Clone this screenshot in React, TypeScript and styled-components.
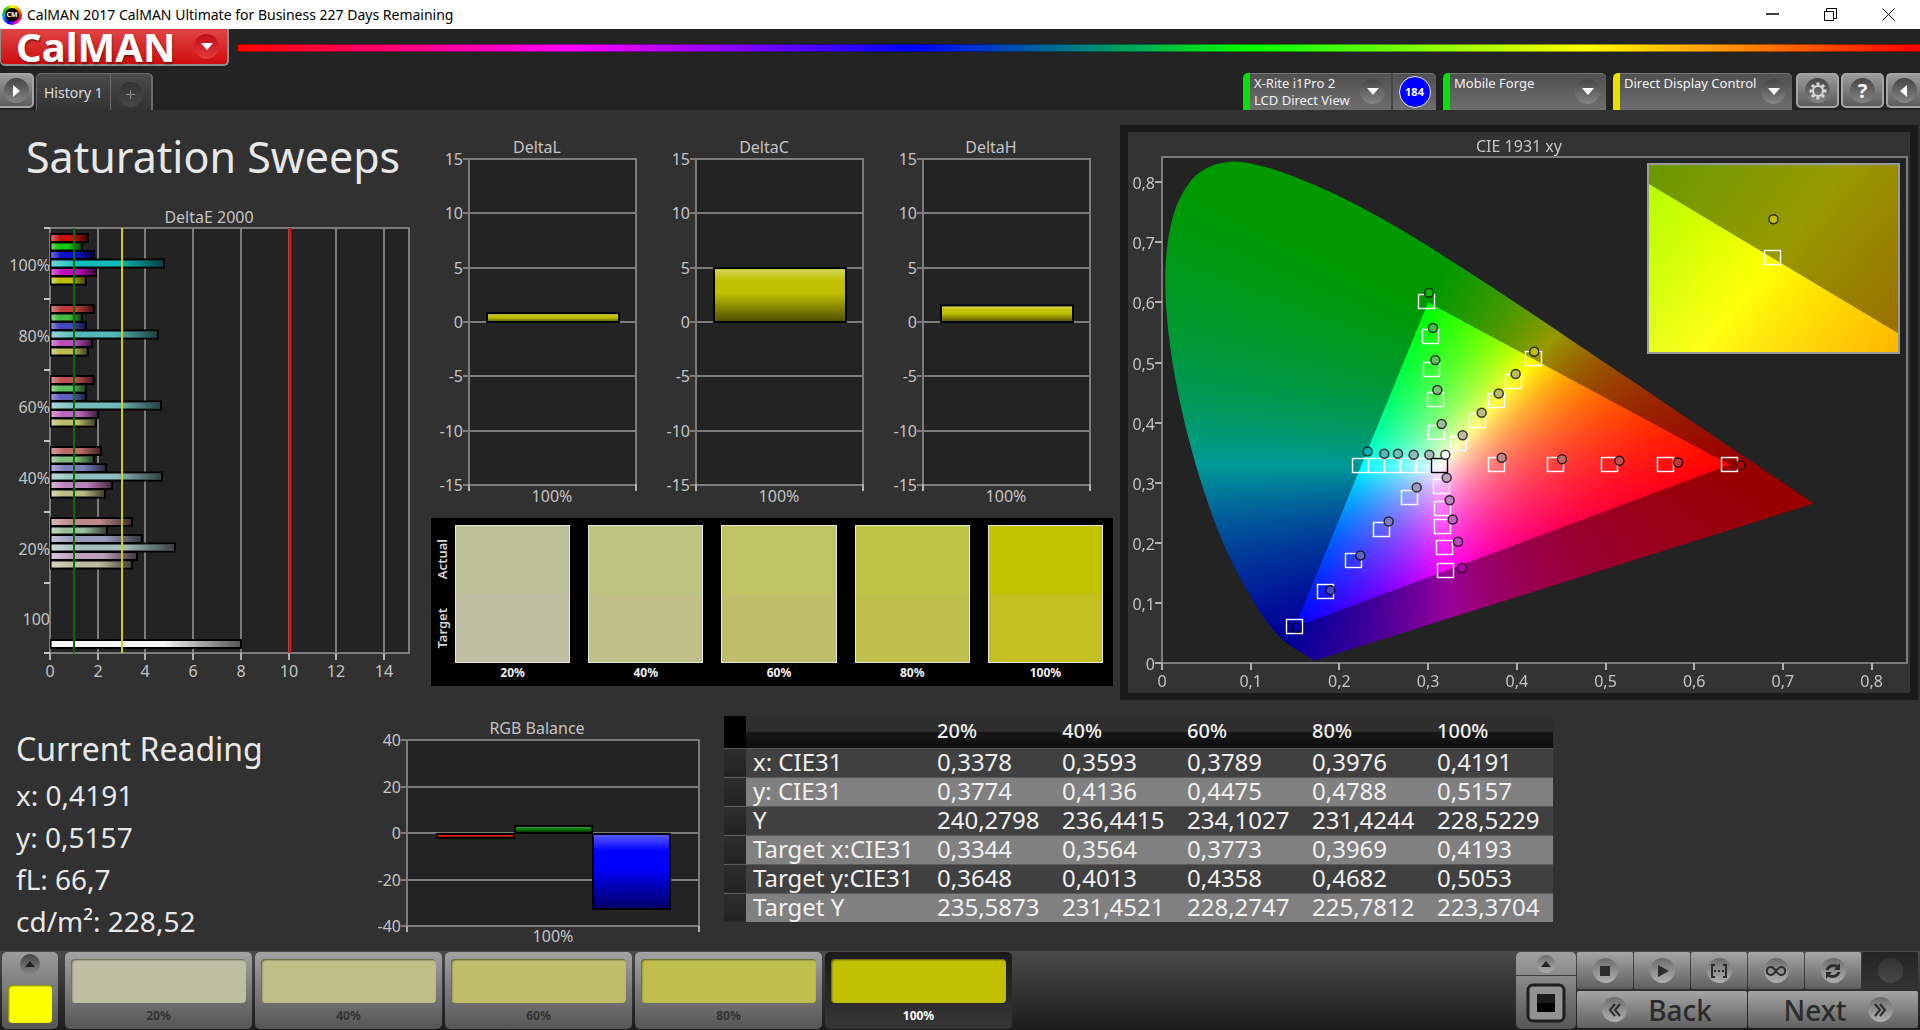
import React, { useEffect, useRef } from "react";
import styled, { createGlobalStyle } from "styled-components";

const sans = `"Noto Sans", "Open Sans", sans-serif`;

const GlobalStyle = createGlobalStyle`
  *, *::before, *::after { box-sizing: border-box; }
  body {
    margin: 0;
    background: #313131;
    color: #e8e8e8;
    font-family: ${sans};
  }
  button { font: inherit; color: inherit; padding: 0; margin: 0; border: 0; cursor: pointer; }
  h1, h2, p { margin: 0; font-weight: 400; }
  svg { display: block; }
`;

/* ---------- shell ---------- */

const Shell = styled.div`
  min-height: 100vh;
  display: flex;
  flex-direction: column;
  overflow: hidden;
`;

const TitleBar = styled.div`
  height: 29px;
  display: flex;
  align-items: center;
  background: #fff;
  color: #000;
  font-size: 14px;
  line-height: 20px;
  padding: 0 3px 0 2px;
  gap: 5px;
`;

const WindowTitle = styled.span`
  flex: 1;
  white-space: nowrap;
`;

const AppMark = styled.span`
  width: 20px;
  height: 20px;
  border-radius: 50%;
  padding: 3px;
  background: conic-gradient(#ff0, #f80, #f00, #f0f, #00f, #0af, #0c0, #ff0);
`;

const AppMarkCore = styled.span`
  display: flex;
  align-items: center;
  justify-content: center;
  width: 14px;
  height: 14px;
  border-radius: 50%;
  background: #000;
  color: #fff;
  font-size: 7px;
  font-weight: 700;
`;

const WindowButtons = styled.div`
  display: flex;
`;

const WindowButton = styled.button`
  width: 58px;
  height: 29px;
  display: grid;
  place-items: center;
  background: none;
`;

const Header = styled.header`
  background: #232323;
`;

const BrandRow = styled.div`
  height: 44px;
  display: flex;
  align-items: flex-start;
  gap: 9px;
`;

const Brand = styled.button`
  width: 229px;
  height: 37px;
  display: flex;
  align-items: center;
  justify-content: space-between;
  padding: 0 8px 0 15px;
  border: solid #8d8d8d;
  border-width: 0 2px 2px 1px;
  border-radius: 0 0 5px 5px;
  background: linear-gradient(#e04545, #cf0d0d);
  color: #fff;
  font-weight: 700;
  font-size: 40px;
  line-height: 32px;
  text-shadow: 1px 2px 2px #5008;
`;

const Rainbow = styled.div`
  flex: 1;
  height: 8px;
  margin-top: 15px;
  border: solid #0006;
  border-width: 1px 0;
  background: linear-gradient(90deg, #f00, #f0f 20%, #00f 40%, #0f0 60%, #ff0 80%, #f00);
`;

const Bubble = styled.span<{ $tone?: "red" | "dark" | "grey" | "light"; $size?: number }>`
  flex: none;
  width: ${(p) => p.$size ?? 25}px;
  height: ${(p) => p.$size ?? 25}px;
  border-radius: 50%;
  display: grid;
  place-items: center;
  background: ${(p) =>
    ({
      red: "linear-gradient(#c00c1c, #e23b3b)",
      dark: "linear-gradient(#333, #484848)",
      grey: "linear-gradient(#454545, #858585)",
      light: "linear-gradient(#6c6c6c, #b0b0b0)",
    })[p.$tone ?? "grey"]};
`;

const ToolRow = styled.div`
  height: 37px;
  display: flex;
  align-items: flex-start;
  justify-content: space-between;
`;

const ToolGroup = styled.div`
  display: flex;
  align-items: flex-start;
`;

const IconButton = styled.button<{ $edge?: "left" | "right" }>`
  width: ${(p) => (p.$edge ? 34 : 43)}px;
  height: 35px;
  display: grid;
  place-items: center;
  border: 2px solid #a5a5a5;
  border-left-width: ${(p) => (p.$edge === "left" ? 0 : 2)}px;
  border-right-width: ${(p) => (p.$edge === "right" ? 0 : 2)}px;
  border-radius: ${(p) => (p.$edge === "left" ? "0 5px 5px 0" : p.$edge === "right" ? "5px 0 0 5px" : "5px")};
  background: linear-gradient(#9a9a9a, #5c5c5c);
  color: #fff;
  margin-left: ${(p) => (p.$edge === "left" ? 0 : 2)}px;
`;

const Tabs = styled.div`
  display: flex;
  height: 37px;
  margin-left: 2px;
  border: solid #6b6b6b;
  border-width: 1px 2px 0 1px;
  border-radius: 5px 5px 0 0;
  background: linear-gradient(#4a4a4a, #333);
  font-size: 14px;
  color: #dcdcdc;
`;

const Tab = styled.button`
  padding: 0 7px;
  background: none;
  white-space: nowrap;
`;

const AddTab = styled.button`
  width: 41px;
  display: grid;
  place-items: center;
  background: none;
  border-left: 1px solid #6b6b6b;
  color: #8a8a8a;
  padding-top: 4px;
`;

const Devices = styled.div`
  display: flex;
  gap: 7px;
  margin-right: 2px;
`;

const Device = styled.div<{ $light: string; $width: number }>`
  display: flex;
  width: ${(p) => p.$width}px;
  height: 37px;
  border-radius: 5px 5px 0 0;
  border-left: 7px solid ${(p) => p.$light};
  background: linear-gradient(#505050, #6e6e6e);
  box-shadow: inset 0 1px 0 #777;
`;

const DevicePick = styled.button`
  flex: 1;
  display: flex;
  justify-content: space-between;
  align-items: flex-start;
  padding: 2px 6px 0 4px;
  background: none;
  text-align: left;
  font-size: 13px;
  line-height: 17px;
  white-space: nowrap;
  color: #f2f2f2;

  ${Bubble} { margin-top: 4px; }
`;

const Counter = styled.span`
  display: grid;
  place-items: center;
  width: 45px;
  border-left: 2px solid #484848;
`;

const CounterDot = styled.span`
  display: grid;
  place-items: center;
  width: 32px;
  height: 32px;
  border-radius: 50%;
  border: 1px solid #e8e8ff;
  background: #00f;
  color: #fff;
  font-size: 11px;
  font-weight: 700;
`;

/* ---------- work area ---------- */

const Main = styled.main`
  flex: 1;
  background: #313131;
`;

const TopRow = styled.section`
  display: grid;
  grid-template-columns: minmax(0, 424fr) minmax(0, 691fr) minmax(0, 805fr);
`;

const Column = styled.div`
  padding-top: 24px;
`;

const PageTitle = styled.h1`
  font-size: 43px;
  line-height: 46px;
  margin-bottom: 24px;
  padding-left: 26px;
  white-space: nowrap;
`;

const Trio = styled.div`
  display: grid;
  grid-template-columns: repeat(3, minmax(0, 1fr));
  padding-right: 10px;
`;

const ChartSvg = styled.svg`
  width: 100%;
  height: auto;
  font-family: ${sans};
  font-size: 16px;
  fill: #c4c4c4;
`;

const SwatchPanel = styled.div`
  display: flex;
  gap: 5px;
  margin: 8px 2px 0 7px;
  padding: 7px 10px 4px 3px;
  height: 168px;
  background: #000;
  font-size: 12px;
  line-height: 20px;
  font-weight: 700;
  color: #f2f2f2;
`;

const SideLabels = styled.div`
  display: flex;
  flex-direction: column;
  justify-content: space-around;
  width: 16px;
  height: 138px;
`;

const SideLabel = styled.span`
  writing-mode: vertical-rl;
  transform: rotate(180deg);
  font-size: 13px;
  line-height: 16px;
  font-weight: 600;
  text-align: center;
  color: #d8d8d8;
`;

const Swatches = styled.div`
  flex: 1;
  display: grid;
  grid-template-columns: repeat(5, 1fr);
  gap: 18px;
`;

const Swatch = styled.figure`
  margin: 0;
  text-align: center;
`;

const SwatchColor = styled.div<{ $actual: string; $target: string }>`
  height: 138px;
  border: 1px solid #e6e6d8;
  background: linear-gradient(${(p) => p.$actual} 50%, ${(p) => p.$target} 50%);
`;

const CiePanel = styled.div`
  display: grid;
  margin: 15px 2px 0 5px;
  border: solid #1a1a1a;
  border-width: 7px 8px;
  background: #333;

  > * { grid-area: 1 / 1; }
`;

const Gamut = styled.canvas`
  display: block;
  width: 100%;
`;

const BottomRow = styled.section`
  display: grid;
  grid-template-columns: minmax(0, 373fr) minmax(0, 332fr) minmax(0, 848fr) minmax(0, 367fr);
  align-items: start;
  height: 251px;
`;

const Reading = styled.div`
  padding: 28px 0 0 16px;
  white-space: nowrap;

  h2 { font-size: 32px; line-height: 42px; margin-bottom: 4px; }
  p { font-size: 28px; line-height: 42px; }
`;

const BalanceBox = styled.div`
  padding-top: 22px;
`;

const DataTable = styled.table`
  width: calc(100% - 19px);
  margin: 16px 0 0 19px;
  border-collapse: collapse;
  table-layout: fixed;
  font-size: 24px;
  line-height: 26px;
  color: #f0f0f0;
  white-space: nowrap;

  th, td { padding: 0 0 2px; text-align: left; font-weight: 400; height: 29px; }
  thead th {
    height: 32px;
    font-size: 20px;
    font-weight: 500;
    background: linear-gradient(#2e2e2e 50%, #171717 50%, #0f0f0f);
  }
  tbody tr { background: #404040; border-top: 1px solid #5a5a5a; }
  tbody tr:nth-child(even) { background: #808080; }
  tbody th { padding-left: 7px; }
  thead tr > :first-child { background: #000; }
  tbody tr > :first-child { background: linear-gradient(#2e2e2e, #222); }
`;

/* ---------- bottom bar ---------- */

const Dock = styled.footer`
  display: flex;
  justify-content: space-between;
  height: 79px;
  padding: 1px 2px;
  background: linear-gradient(#4a4a4a, #1c1c1c);
`;

const Levels = styled.div`
  display: flex;
  gap: 3px;
`;

const CurrentPatch = styled.button`
  width: 56px;
  margin-right: 4px;
  display: flex;
  flex-direction: column;
  align-items: center;
  justify-content: space-between;
  padding: 2px 6px 6px;
  border-radius: 5px;
  background: linear-gradient(#9c9c9c, #555);
`;

const PatchColor = styled.span<{ $color: string; $height: number }>`
  display: block;
  width: 100%;
  height: ${(p) => p.$height}px;
  border-radius: 4px;
  background: ${(p) => p.$color};
  box-shadow: inset 1px 1px 2px #0008;
`;

const Level = styled.button<{ $active: boolean }>`
  width: 187px;
  padding: 7px 6px 0;
  border-radius: 5px;
  background: ${(p) => (p.$active ? "linear-gradient(#1a1a1a, #363636)" : "linear-gradient(#a2a2a2, #555)")};
  color: ${(p) => (p.$active ? "#fff" : "#333")};
  font-size: 12px;
  line-height: 26px;
  font-weight: 700;
  display: flex;
  flex-direction: column;
  align-items: center;
`;

const Transport = styled.div`
  display: flex;
  gap: 1px;
`;

const MeterStack = styled.div`
  width: 60px;
  display: flex;
  flex-direction: column;
  gap: 1px;
`;

const MeterToggle = styled.button`
  height: 23px;
  display: grid;
  place-items: center;
  border-radius: 5px 5px 0 0;
  background: linear-gradient(#a0a0a0, #8a8a8a);
`;

const MeterStop = styled.button`
  flex: 1;
  display: grid;
  place-items: center;
  border-radius: 0 0 5px 5px;
  background: linear-gradient(#8a8a8a, #555);
`;

const Controls = styled.div`
  display: flex;
  flex-direction: column;
  gap: 2px;
`;

const ControlRow = styled.div`
  display: flex;
  gap: 1px;
`;

const Control = styled.button<{ $off?: boolean }>`
  width: 56px;
  height: 37px;
  display: grid;
  place-items: center;
  border-radius: 2px;
  background: ${(p) => (p.$off ? "linear-gradient(#242424, #333)" : "linear-gradient(#a5a5a5, #5f5f5f)")};
  color: #2d2d2d;
`;

const NavButton = styled.button<{ $side: "left" | "right" }>`
  width: 170px;
  height: 37px;
  display: flex;
  align-items: center;
  justify-content: center;
  gap: 21px;
  padding: ${(p) => (p.$side === "left" ? "0 10px 0 0" : "0 0 0 10px")};
  border-radius: 2px;
  background: linear-gradient(#a5a5a5, #5f5f5f);
  color: #2b2b2b;
  font-size: 28px;
  line-height: 36px;
  font-weight: 500;
`;

/* ---------- glyphs ---------- */

const Triangle = ({ dir, color = "#fff" }: { dir: "down" | "right" | "left" | "up"; color?: string }) => {
  const d = { down: "M0 2h12l-6 7z", right: "M3 0v12l7-6z", left: "M9 0v12l-7-6z", up: "M1 9h10l-5-6z" }[dir];
  return (
    <svg width="12" height="12" viewBox="0 0 12 12" aria-hidden="true">
      <path d={d} fill={color} />
    </svg>
  );
};

const Gear = () => (
  <svg width="20" height="20" viewBox="0 0 20 20" fill="none" stroke="#d8d8d8" aria-hidden="true">
    <circle cx="10" cy="10" r="5" strokeWidth="2" />
    {[0, 45, 90, 135, 180, 225, 270, 315].map((a) => (
      <path key={a} d="M10 4.5V1.5" strokeWidth="3" transform={`rotate(${a} 10 10)`} />
    ))}
  </svg>
);

const QuestionMark = styled.span`
  font-size: 20px;
  line-height: 24px;
  font-weight: 700;
`;

const Chevrons = ({ dir }: { dir: "left" | "right" }) => (
  <svg width="14" height="14" viewBox="0 0 14 14" fill="none" stroke="#2d2d2d" strokeWidth="2" aria-hidden="true">
    <path d={dir === "left" ? "M7 1L2 7l5 6M12 1L7 7l5 6" : "M2 1l5 6-5 6M7 1l5 6-5 6"} />
  </svg>
);

const transportGlyphs: { name: string; art: React.ReactNode }[] = [
  { name: "Stop", art: <path d="M5 5h10v10H5z" fill="currentColor" /> },
  { name: "Play", art: <path d="M6 4l11 6-11 6z" fill="currentColor" /> },
  {
    name: "Read series",
    art: (
      <g fill="none" stroke="currentColor" strokeWidth="2">
        <path d="M6 4H3v12h3M14 4h3v12h-3" />
        <path d="M5 10h10" strokeDasharray="2 2" />
      </g>
    ),
  },
  {
    name: "Read continuously",
    art: (
      <path
        d="M10 10C8 7 6.500 6 4.800 6a4 4 0 0 0 0 8C6.500 14 8 13 10 10s3.500-4 5.200-4a4 4 0 0 1 0 8C13.500 14 12 13 10 10z"
        fill="none"
        stroke="currentColor"
        strokeWidth="2"
      />
    ),
  },
  {
    name: "Refresh",
    art: (
      <g fill="none" stroke="currentColor" strokeWidth="3">
        <path d="M4 9c1-4 7-6 11-3M16 11c-1 4-7 6-11 3" />
        <path d="M17 2v7h-6zM3 18v-7h6z" fill="currentColor" stroke="none" />
      </g>
    ),
  },
];

/* ---------- charts ---------- */

const GRID = "#7c7c7c";

const deltaEGroups = [
  { label: "100%", colors: ["#c80f0f", "#0fc80f", "#0f0fc8", "#0fbcbc", "#bc0fbc", "#bcbc0f"], values: [1.65, 1.38, 1.88, 4.8, 1.95, 1.55] },
  { label: "80%", colors: ["#bd3a3a", "#45bd45", "#4545bd", "#55b8b8", "#bd4abd", "#bcbc50"], values: [1.88, 1.38, 1.55, 4.55, 1.8, 1.65] },
  { label: "60%", colors: ["#bd5050", "#60bd60", "#6060bd", "#74bcbc", "#bd66bd", "#bcbc6c"], values: [1.88, 1.55, 1.55, 4.7, 2.05, 1.98] },
  { label: "40%", colors: ["#bd6868", "#7ebd7e", "#7e7ebd", "#8ebcbc", "#bd80bd", "#bcbc86"], values: [2.17, 1.88, 2.4, 4.75, 2.65, 2.33] },
  { label: "20%", colors: ["#bd8888", "#9abd9a", "#9a9abd", "#a4bcba", "#bda0bd", "#bcbca0"], values: [3.48, 2.43, 3.9, 5.26, 3.7, 3.48] },
];

const DeltaEChart = () => {
  const xOf = (v: number) => Math.round(50 + (v * 358) / 15);
  const bar = (key: string, y: number, value: number, color: string) => {
    const w = xOf(value) - 52;
    return (
      <g key={key}>
        <rect x={51} y={y - 4} width={w} height={8} fill={color} stroke="#000" strokeWidth={2} />
        <rect x={51} y={y - 3} width={w - 1} height={6} fill="url(#tube)" />
      </g>
    );
  };
  return (
    <ChartSvg viewBox="0 0 424 486" role="img" aria-label="DeltaE 2000">
      <defs>
        <linearGradient id="tube">
          <stop offset="0" stopColor="#fff" stopOpacity=".4" />
          <stop offset=".25" stopColor="#fff" stopOpacity="0" />
          <stop offset=".6" stopColor="#000" stopOpacity="0" />
          <stop offset="1" stopColor="#000" stopOpacity=".65" />
        </linearGradient>
      </defs>
      <text x={209} y={19} textAnchor="middle">DeltaE 2000</text>
      <rect x={50} y={24} width={359} height={425} fill="#232323" stroke={GRID} strokeWidth={2} />
      {[0, 2, 4, 6, 8, 10, 12, 14].map((n) => (
        <g key={n}>
          <path d={`M${xOf(n)} 24V449`} stroke={GRID} strokeWidth={2} />
          <path d={`M${xOf(n)} 449v7`} stroke="#b0b0b0" strokeWidth={2} />
          <text x={xOf(n)} y={473} textAnchor="middle">{n}</text>
        </g>
      ))}
      {[0, 1, 2, 3, 4, 5, 6].map((n) => (
        <path key={n} d={`M44 ${24 + n * 71 - (n === 6 ? 1 : 0)}h6`} stroke="#c4c4c4" strokeWidth={2} />
      ))}
      {deltaEGroups.map((g, i) => (
        <g key={g.label}>
          <text x={50} y={67 + i * 71} textAnchor="end">{g.label}</text>
          {g.values.map((v, j) => bar(`${i}-${j}`, 34 + i * 71 + j * 8.5, v, g.colors[j]))}
        </g>
      ))}
      <text x={50} y={421} textAnchor="end">100</text>
      {bar("white", 440, 8.05, "#f4f4f4")}
      <path d="M74 24V449" stroke="#0b6b0b" strokeWidth={2} />
      <path d="M122 24V449" stroke="#cfcf10" strokeWidth={2} />
      <path d="M290 24V449" stroke="#d01414" strokeWidth={3} />
    </ChartSvg>
  );
};

const Shade = ({ id }: { id: string }) => (
  <linearGradient id={id} x1="0" x2="0" y1="0" y2="1">
    <stop offset="0" stopColor="#fff" stopOpacity=".35" />
    <stop offset=".22" stopColor="#fff" stopOpacity="0" />
    <stop offset=".45" stopColor="#000" stopOpacity="0" />
    <stop offset="1" stopColor="#000" stopOpacity=".6" />
  </linearGradient>
);

const DeltaChart = ({ title, value }: { title: string; value: number }) => {
  const yOf = (v: number) => 188 - v * 11;
  return (
    <ChartSvg viewBox="0 0 227 376" role="img" aria-label={title}>
      <defs><Shade id={`shade-${title}`} /></defs>
      <text x={113} y={19} textAnchor="middle">{title}</text>
      <rect x={45} y={25} width={167} height={326} fill="#232323" stroke={GRID} strokeWidth={2} />
      {[15, 10, 5, 0, -5, -10, -15].map((n) => {
        const y = Math.round(188 - (n * 163) / 15);
        return (
          <g key={n}>
            <path d={`M39 ${y}H212`} stroke={GRID} strokeWidth={2} />
            <text x={39} y={y + 6} textAnchor="end">{n}</text>
          </g>
        );
      })}
      <path d="M45 350v7M212 350v7" stroke="#b0b0b0" strokeWidth={2} />
      <rect x={63} y={yOf(value)} width={132} height={188 - yOf(value)} fill="#c0c000" stroke="#000" strokeWidth={2} />
      <rect x={64} y={yOf(value) + 1} width={130} height={187 - yOf(value)} fill={`url(#shade-${title})`} />
      <text x={128} y={368} textAnchor="middle">100%</text>
    </ChartSvg>
  );
};

const BalanceChart = () => (
  <ChartSvg viewBox="0 0 332 228" role="img" aria-label="RGB Balance">
    <defs><Shade id="shade-rgb" /></defs>
    <text x={164} y={12} textAnchor="middle">RGB Balance</text>
    <rect x={34} y={18} width={292} height={186} fill="#232323" stroke={GRID} strokeWidth={2} />
    {[40, 20, 0, -20, -40].map((n) => {
      const y = Math.round(111 - (n * 93) / 40);
      return (
        <g key={n}>
          <path d={`M28 ${y}H326`} stroke={GRID} strokeWidth={2} />
          <text x={28} y={y + 6} textAnchor="end">{n}</text>
        </g>
      );
    })}
    <path d="M34 204v6M326 204v6" stroke="#b0b0b0" strokeWidth={2} />
    {[
      { x: 64, y: 112, h: 4, c: "#f01818" },
      { x: 142, y: 104, h: 7, c: "#0a800a" },
      { x: 220, y: 112, h: 75, c: "#0000ff" },
    ].map((b) => (
      <g key={b.x}>
        <rect x={b.x} y={b.y} width={77} height={b.h} fill={b.c} stroke="#000" strokeWidth={2} />
        <rect x={b.x + 1} y={b.y + 1} width={75} height={b.h - 2} fill="url(#shade-rgb)" />
      </g>
    ))}
    <text x={180} y={220} textAnchor="middle">100%</text>
  </ChartSvg>
);

/* ---------- CIE 1931 diagram ---------- */

type XY = [number, number];

const locus: XY[] = [
  [0.1741, 0.005], [0.1714, 0.0051], [0.1689, 0.0069], [0.1644, 0.0109], [0.1566, 0.0177], [0.144, 0.0297],
  [0.1355, 0.0399], [0.1241, 0.0578], [0.1096, 0.0868], [0.0913, 0.1327], [0.0687, 0.2007], [0.0454, 0.295],
  [0.0235, 0.4127], [0.0082, 0.5384], [0.0039, 0.6548], [0.0139, 0.7502], [0.0389, 0.812], [0.0743, 0.8338],
  [0.1142, 0.8262], [0.1547, 0.8059], [0.1929, 0.7816], [0.2296, 0.7543], [0.2658, 0.7243], [0.3016, 0.6923],
  [0.3731, 0.6245], [0.4441, 0.5547], [0.5125, 0.4866], [0.5752, 0.4242], [0.627, 0.3725], [0.6658, 0.334],
  [0.6915, 0.3083], [0.719, 0.2809], [0.7347, 0.2653],
];

const rec709: XY[] = [[0.64, 0.33], [0.3, 0.6], [0.15, 0.06]];

const CIE_W = 782;
const CIE_H = 561;
const px = (x: number) => 34 + 887 * x;
const py = (y: number) => 531 - 601 * y;

const inset = { x: 520, y: 32, w: 251, h: 189, cx: 0.4193, cy: 0.5053, span: 0.05 };
const insetX = (x: number) => inset.x + inset.w * (0.5 + (x - inset.cx) / inset.span);
const insetY = (y: number) => inset.y + inset.h * (0.5 - (y - inset.cy) / inset.span);

/* Linear-light RGB of a chromaticity, scaled so its strongest channel is full. */
const chroma = (x: number, y: number) => {
  const X = x / y;
  const Z = (1 - x - y) / y;
  const lin = [
    3.2406 * X - 1.5372 - 0.4986 * Z,
    -0.9689 * X + 1.8758 + 0.0415 * Z,
    0.0557 * X - 0.204 + 1.057 * Z,
  ].map((v) => Math.max(0, v));
  const top = Math.max(...lin) || 1;
  return lin.map((v) => (255 * v) / top);
};

const field = (w: number, h: number, toXY: (i: number, j: number) => XY, gain: number) => {
  const c = document.createElement("canvas");
  c.width = w;
  c.height = h;
  const g = c.getContext("2d")!;
  const img = g.createImageData(w, h);
  for (let j = 0; j < h; j++) {
    for (let i = 0; i < w; i++) {
      const [x, y] = toXY(i, j);
      const rgb = chroma(x, Math.max(y, 0.002));
      const o = (j * w + i) * 4;
      img.data[o] = rgb[0] * gain;
      img.data[o + 1] = rgb[1] * gain;
      img.data[o + 2] = rgb[2] * gain;
      img.data[o + 3] = 255;
    }
  }
  g.putImageData(img, 0, 0);
  return c;
};

const paintGamut = (g: CanvasRenderingContext2D) => {
  g.clearRect(0, 0, CIE_W, CIE_H);
  g.fillStyle = "#232323";
  g.fillRect(34, 25, 745, 506);

  const main = (i: number, j: number): XY => [(i - 34) / 887, (531 - j) / 601];
  const triangle = (fx: (x: number) => number, fy: (y: number) => number) => {
    g.beginPath();
    rec709.forEach(([x, y], k) => (k ? g.lineTo(fx(x), fy(y)) : g.moveTo(fx(x), fy(y))));
    g.closePath();
  };

  g.save();
  g.beginPath();
  const pts = locus.map(([x, y]): XY => [px(x), py(y)]);
  g.moveTo(...pts[0]);
  for (let k = 0; k < pts.length - 1; k++) {
    const a = pts[Math.max(k - 1, 0)];
    const b = pts[k];
    const c = pts[k + 1];
    const d = pts[Math.min(k + 2, pts.length - 1)];
    g.bezierCurveTo(
      b[0] + (c[0] - a[0]) / 6, b[1] + (c[1] - a[1]) / 6,
      c[0] - (d[0] - b[0]) / 6, c[1] - (d[1] - b[1]) / 6,
      c[0], c[1],
    );
  }
  g.closePath();
  g.clip();
  g.drawImage(field(CIE_W, CIE_H, main, 0.6), 0, 0);
  g.restore();

  g.save();
  triangle(px, py);
  g.clip();
  g.drawImage(field(CIE_W, CIE_H, main, 1), 0, 0);
  g.restore();

  const zoomed = (i: number, j: number): XY => [
    inset.cx + (i / inset.w - 0.5) * inset.span,
    inset.cy + (0.5 - j / inset.h) * inset.span,
  ];
  g.drawImage(field(inset.w, inset.h, zoomed, 0.6), inset.x, inset.y);
  g.save();
  g.beginPath();
  g.rect(inset.x, inset.y, inset.w, inset.h);
  g.clip();
  triangle(insetX, insetY);
  g.clip();
  g.drawImage(field(inset.w, inset.h, zoomed, 1), inset.x, inset.y);
  g.restore();
};

const targets: XY[] = [
  [0.298, 0.602], [0.302, 0.5446], [0.303, 0.49], [0.3077, 0.4393], [0.309, 0.385],
  [0.4185, 0.507], [0.3955, 0.4695], [0.3765, 0.4375], [0.3555, 0.4043], [0.334, 0.3667],
  [0.639, 0.331], [0.567, 0.331], [0.5036, 0.331], [0.4431, 0.331], [0.3762, 0.331],
  [0.2236, 0.3298], [0.2416, 0.3298], [0.2597, 0.3298], [0.277, 0.3298], [0.2946, 0.3298],
  [0.3145, 0.2953], [0.316, 0.2571], [0.316, 0.2276], [0.3175, 0.1925], [0.3194, 0.155],
  [0.2788, 0.2756], [0.2469, 0.2227], [0.2153, 0.1716], [0.1838, 0.1193], [0.1484, 0.0614],
];

const readings: [number, number, string][] = [
  [0.2999, 0.616, "#00b800"], [0.3044, 0.5576, "#45bd45"], [0.307, 0.504, "#60bd60"], [0.3093, 0.4542, "#7ebd7e"], [0.3141, 0.3976, "#9abd9a"],
  [0.4185, 0.518, "#c0c000"], [0.3976, 0.481, "#bcbc50"], [0.3785, 0.4485, "#bcbc6c"], [0.3593, 0.4165, "#bcbc86"], [0.3378, 0.379, "#bcbca0"],
  [0.6509, 0.3292, "#b80000"], [0.5806, 0.3335, "#bd3a3a"], [0.5145, 0.3366, "#bd5050"], [0.4498, 0.339, "#bd6868"], [0.3818, 0.3415, "#bd8888"],
  [0.2307, 0.352, "#00b4b4"], [0.2495, 0.3483, "#55b8b8"], [0.2649, 0.3483, "#74bcbc"], [0.2826, 0.3464, "#8ebcbc"], [0.3003, 0.3464, "#a4bcba"],
  [0.3183, 0.3464, "#ffffff"],
  [0.3198, 0.3083, "#bda0bd"], [0.3232, 0.2707, "#bd80bd"], [0.3266, 0.2387, "#bd66bd"], [0.3326, 0.2018, "#bd4abd"], [0.3371, 0.1581, "#b400b4"],
  [0.286, 0.2922, "#9a9abd"], [0.2544, 0.2356, "#7e7ebd"], [0.2225, 0.179, "#6060bd"], [0.1887, 0.1212, "#4545bd"], [0.1507, 0.0589, "#0000b8"],
];

const Target = ({ x, y, color = "#fff" }: { x: number; y: number; color?: string }) => (
  <rect x={Math.round(x) - 7.5} y={Math.round(y) - 6.5} width={16} height={14} fill="none" stroke={color} strokeWidth={1.4} />
);

const Dot = ({ x, y, color }: { x: number; y: number; color: string }) => (
  <circle cx={x + 1} cy={y} r={4.5} fill={color} stroke="#000" strokeOpacity={0.75} strokeWidth={1.5} />
);

const CieChart = () => {
  const ref = useRef<HTMLCanvasElement>(null);
  useEffect(() => {
    const g = ref.current?.getContext("2d");
    if (g) paintGamut(g);
  }, []);
  return (
    <CiePanel>
      <Gamut ref={ref} width={CIE_W} height={CIE_H} aria-hidden="true" />
      <ChartSvg viewBox={`0 0 ${CIE_W} ${CIE_H}`} role="img" aria-label="CIE 1931 xy">
        <text x={391} y={20} textAnchor="middle">CIE 1931 xy</text>
        <rect x={34} y={25} width={745} height={506} fill="none" stroke={GRID} strokeWidth={2} />
        {[0, 1, 2, 3, 4, 5, 6, 7, 8].map((n) => (
          <g key={n}>
            <path d={`M${Math.round(px(n / 10))} 531v7M34 ${Math.round(py(n / 10))}h-7`} stroke="#b0b0b0" strokeWidth={2} />
            <text x={px(n / 10)} y={555} textAnchor="middle">{n ? `0,${n}` : "0"}</text>
            <text x={27} y={py(n / 10) + 7} textAnchor="end">{n ? `0,${n}` : "0"}</text>
          </g>
        ))}
        {targets.map(([x, y]) => <Target key={`${x} ${y}`} x={px(x)} y={py(y)} />)}
        <Target x={px(0.3127)} y={py(0.3298)} color="#000" />
        {readings.map(([x, y, c]) => <Dot key={c + x} x={px(x)} y={py(y)} color={c} />)}
        <rect x={inset.x} y={inset.y} width={inset.w} height={inset.h} fill="none" stroke="#9a9a9a" strokeWidth={2} />
        <Target x={insetX(0.4191)} y={insetY(0.5056)} />
        <Dot x={insetX(0.4191)} y={insetY(0.5157)} color="#c0c000" />
      </ChartSvg>
    </CiePanel>
  );
};

/* ---------- data ---------- */

const levels = [
  { label: "20%", actual: "#bdc29b", target: "#bfbfa4" },
  { label: "40%", actual: "#bdc380", target: "#bfbf87" },
  { label: "60%", actual: "#bec464", target: "#bfbf6b" },
  { label: "80%", actual: "#bec444", target: "#bfbf4e" },
  { label: "100%", actual: "#bfc300", target: "#c2c020" },
];

const rows: [string, string[]][] = [
  ["x: CIE31", ["0,3378", "0,3593", "0,3789", "0,3976", "0,4191"]],
  ["y: CIE31", ["0,3774", "0,4136", "0,4475", "0,4788", "0,5157"]],
  ["Y", ["240,2798", "236,4415", "234,1027", "231,4244", "228,5229"]],
  ["Target x:CIE31", ["0,3344", "0,3564", "0,3773", "0,3969", "0,4193"]],
  ["Target y:CIE31", ["0,3648", "0,4013", "0,4358", "0,4682", "0,5053"]],
  ["Target Y", ["235,5873", "231,4521", "228,2747", "225,7812", "223,3704"]],
];

/* ---------- app ---------- */

export default function App() {
  return (
    <Shell>
      <GlobalStyle />
      <TitleBar>
        <AppMark><AppMarkCore>CM</AppMarkCore></AppMark>
        <WindowTitle>CalMAN 2017 CalMAN Ultimate for Business 227 Days Remaining</WindowTitle>
        <WindowButtons>
          <WindowButton aria-label="Minimize">
            <svg width="13" height="13" viewBox="0 0 13 13"><path d="M0 6h13" stroke="#000" strokeWidth="1.5" /></svg>
          </WindowButton>
          <WindowButton aria-label="Restore">
            <svg width="13" height="13" viewBox="0 0 13 13" fill="none" stroke="#000"><path d="M.5 3.500h9v9h-9zM2.500 3.500v-3h10v10h-3" /></svg>
          </WindowButton>
          <WindowButton aria-label="Close">
            <svg width="13" height="13" viewBox="0 0 13 13" stroke="#000"><path d="M.5.5l12 12M12.500.5l-12 12" /></svg>
          </WindowButton>
        </WindowButtons>
      </TitleBar>

      <Header>
        <BrandRow>
          <Brand>CalMAN<Bubble $tone="red"><Triangle dir="down" /></Bubble></Brand>
          <Rainbow />
        </BrandRow>
        <ToolRow>
          <ToolGroup>
            <IconButton $edge="left" aria-label="Open panel"><Bubble><Triangle dir="right" /></Bubble></IconButton>
            <Tabs>
              <Tab>History 1</Tab>
              <AddTab aria-label="Add tab">
                <Bubble $tone="dark">
                  <svg width="9" height="9" viewBox="0 0 9 9" stroke="#8a8a8a"><path d="M4.500 0v9M0 4.500h9" /></svg>
                </Bubble>
              </AddTab>
            </Tabs>
          </ToolGroup>
          <ToolGroup>
            <Devices>
              <Device $light="#0be00b" $width={193}>
                <DevicePick aria-haspopup="listbox">
                  <span>X-Rite i1Pro 2<br />LCD Direct View</span>
                  <Bubble><Triangle dir="down" /></Bubble>
                </DevicePick>
                <Counter><CounterDot>184</CounterDot></Counter>
              </Device>
              <Device $light="#0be00b" $width={163}>
                <DevicePick aria-haspopup="listbox">
                  Mobile Forge
                  <Bubble><Triangle dir="down" /></Bubble>
                </DevicePick>
              </Device>
              <Device $light="#e8e000" $width={179}>
                <DevicePick aria-haspopup="listbox">
                  Direct Display Control
                  <Bubble><Triangle dir="down" /></Bubble>
                </DevicePick>
              </Device>
            </Devices>
            <IconButton aria-label="Settings"><Bubble><Gear /></Bubble></IconButton>
            <IconButton aria-label="Help"><Bubble><QuestionMark>?</QuestionMark></Bubble></IconButton>
            <IconButton $edge="right" aria-label="Collapse"><Bubble><Triangle dir="left" /></Bubble></IconButton>
          </ToolGroup>
        </ToolRow>
      </Header>

      <Main>
        <TopRow>
          <Column>
            <PageTitle>Saturation Sweeps</PageTitle>
            <DeltaEChart />
          </Column>
          <Column>
            <Trio>
              <DeltaChart title="DeltaL" value={0.8} />
              <DeltaChart title="DeltaC" value={4.9} />
              <DeltaChart title="DeltaH" value={1.5} />
            </Trio>
            <SwatchPanel>
              <SideLabels><SideLabel>Actual</SideLabel><SideLabel>Target</SideLabel></SideLabels>
              <Swatches>
                {levels.map((l) => (
                  <Swatch key={l.label}>
                    <SwatchColor $actual={l.actual} $target={l.target} />
                    <figcaption>{l.label}</figcaption>
                  </Swatch>
                ))}
              </Swatches>
            </SwatchPanel>
          </Column>
          <CieChart />
        </TopRow>

        <BottomRow>
          <Reading>
            <h2>Current Reading</h2>
            <p>x: 0,4191</p>
            <p>y: 0,5157</p>
            <p>fL: 66,7</p>
            <p>cd/m²: 228,52</p>
          </Reading>
          <BalanceBox><BalanceChart /></BalanceBox>
          <DataTable>
            <colgroup>
              <col width="22" />
              <col width="191" />
              <col width="125" />
              <col width="125" />
              <col width="125" />
              <col width="125" />
              <col />
            </colgroup>
            <thead>
              <tr>
                <td />
                <th />
                {levels.map((l) => <th key={l.label} scope="col">{l.label}</th>)}
              </tr>
            </thead>
            <tbody>
              {rows.map(([name, cells]) => (
                <tr key={name}>
                  <td />
                  <th scope="row">{name}</th>
                  {cells.map((c) => <td key={c}>{c}</td>)}
                </tr>
              ))}
            </tbody>
          </DataTable>
        </BottomRow>
      </Main>

      <Dock>
        <Levels>
          <CurrentPatch aria-label="Current patch">
            <Bubble $size={20}><Triangle dir="up" color="#222" /></Bubble>
            <PatchColor $color="#ff0" $height={38} />
          </CurrentPatch>
          {levels.map((l, i) => (
            <Level key={l.label} $active={i === 4}>
              <PatchColor $color={i === 4 ? "#c0c000" : l.target} $height={45} />
              {l.label}
            </Level>
          ))}
        </Levels>
        <Transport>
          <MeterStack>
            <MeterToggle aria-label="Show meter"><Bubble $tone="light" $size={18}><Triangle dir="up" color="#222" /></Bubble></MeterToggle>
            <MeterStop aria-label="Stop meter">
              <svg width="40" height="40" viewBox="0 0 40 40">
                <rect x="2" y="2" width="36" height="36" rx="5" fill="#939393" stroke="#1e1e1e" strokeWidth="3" />
                <path d="M11 11h18v18H11z" fill="#000" />
                <path d="M11 11h18v9H11z" fill="#1c1c1c" />
              </svg>
            </MeterStop>
          </MeterStack>
          <Controls>
            <ControlRow>
              {transportGlyphs.map((g) => (
                <Control key={g.name} aria-label={g.name}>
                  <Bubble $tone="light"><svg width="20" height="20" viewBox="0 0 20 20">{g.art}</svg></Bubble>
                </Control>
              ))}
              <Control $off aria-label="Unavailable" disabled><Bubble $tone="dark" /></Control>
            </ControlRow>
            <ControlRow>
              <NavButton $side="left"><Bubble $tone="light"><Chevrons dir="left" /></Bubble>Back</NavButton>
              <NavButton $side="right">Next<Bubble $tone="light"><Chevrons dir="right" /></Bubble></NavButton>
            </ControlRow>
          </Controls>
        </Transport>
      </Dock>
    </Shell>
  );
}
